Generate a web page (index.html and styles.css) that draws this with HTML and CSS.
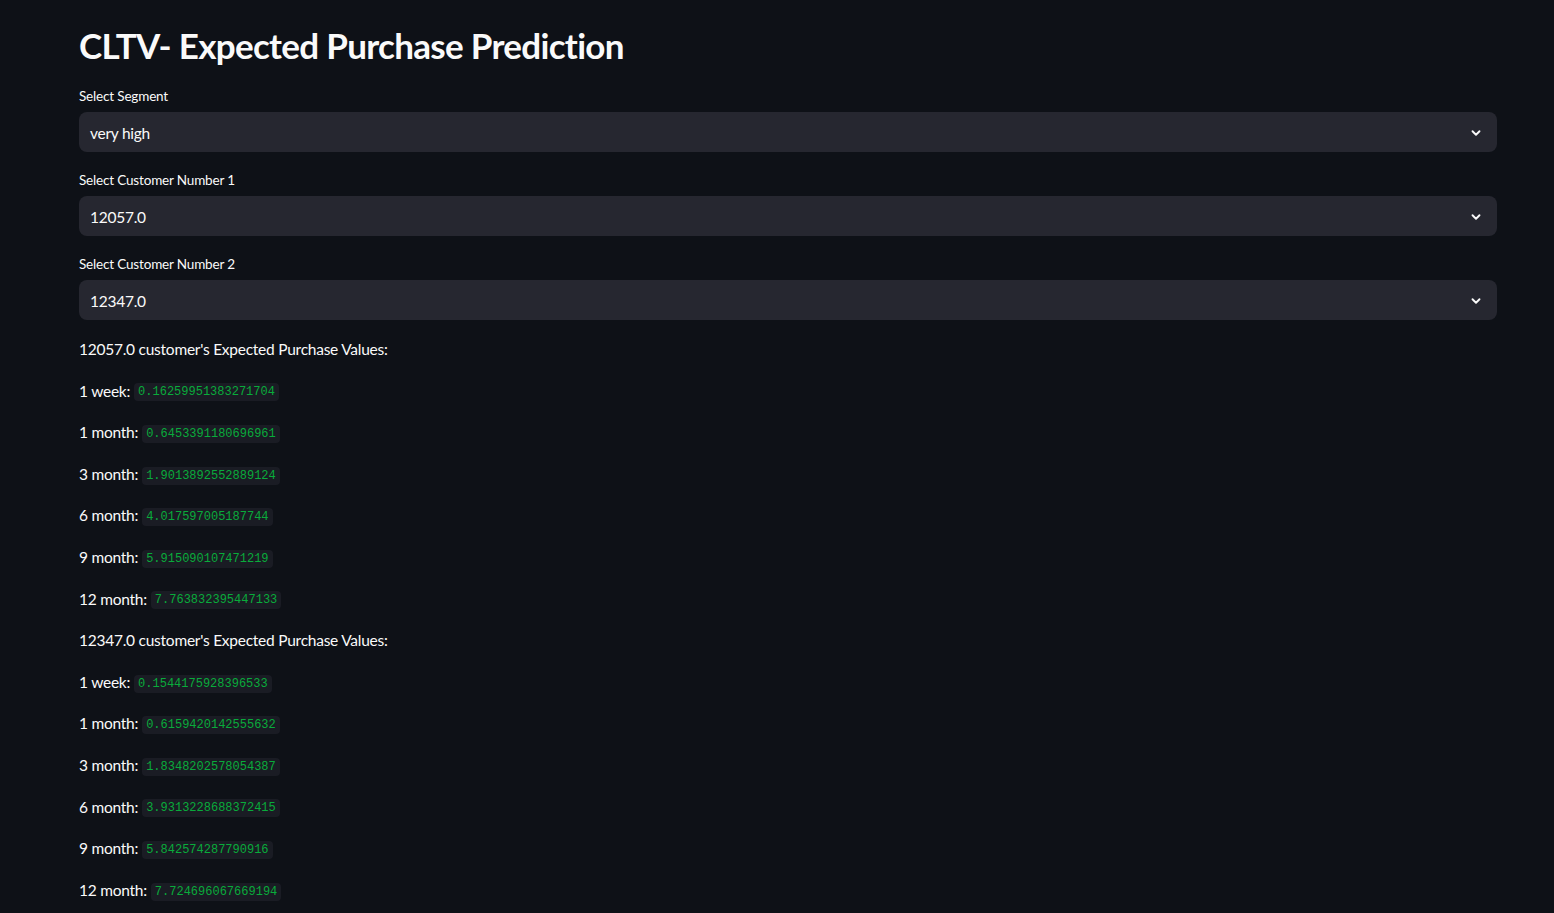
FILE: index.html
```html
<!DOCTYPE html>
<html lang="en">
<head>
<meta charset="utf-8">
<title>CLTV- Expected Purchase Prediction</title>
<link rel="stylesheet" href="styles.css">
</head>
<body>
<main class="main">
  <h1 class="title">CLTV- Expected Purchase Prediction</h1>

  <div class="widget">
    <label class="widget-label">Select Segment</label>
    <div class="select">
      <span class="select-value">very high</span>
      <svg class="chevron" width="14" height="14" viewBox="0 0 24 24"><path d="M6 9l6 6 6-6" fill="none" stroke="#fafafa" stroke-width="3.2" stroke-linecap="round" stroke-linejoin="round"/></svg>
    </div>
  </div>

  <div class="widget">
    <label class="widget-label">Select Customer Number 1</label>
    <div class="select">
      <span class="select-value">12057.0</span>
      <svg class="chevron" width="14" height="14" viewBox="0 0 24 24"><path d="M6 9l6 6 6-6" fill="none" stroke="#fafafa" stroke-width="3.2" stroke-linecap="round" stroke-linejoin="round"/></svg>
    </div>
  </div>

  <div class="widget">
    <label class="widget-label">Select Customer Number 2</label>
    <div class="select">
      <span class="select-value">12347.0</span>
      <svg class="chevron" width="14" height="14" viewBox="0 0 24 24"><path d="M6 9l6 6 6-6" fill="none" stroke="#fafafa" stroke-width="3.2" stroke-linecap="round" stroke-linejoin="round"/></svg>
    </div>
  </div>

  <div class="results">
    <p>12057.0 customer's Expected Purchase Values:</p>
    <p><span>1 week:</span><code>0.16259951383271704</code></p>
    <p><span>1 month:</span><code>0.6453391180696961</code></p>
    <p><span>3 month:</span><code>1.9013892552889124</code></p>
    <p><span>6 month:</span><code>4.017597005187744</code></p>
    <p><span>9 month:</span><code>5.915090107471219</code></p>
    <p><span>12 month:</span><code>7.763832395447133</code></p>
    <p>12347.0 customer's Expected Purchase Values:</p>
    <p><span>1 week:</span><code>0.1544175928396533</code></p>
    <p><span>1 month:</span><code>0.6159420142555632</code></p>
    <p><span>3 month:</span><code>1.8348202578054387</code></p>
    <p><span>6 month:</span><code>3.9313228688372415</code></p>
    <p><span>9 month:</span><code>5.842574287790916</code></p>
    <p><span>12 month:</span><code>7.724696067669194</code></p>
  </div>
</main>
</body>
</html>
```
FILE: styles.css
```css
html, body {
  margin: 0;
  padding: 0;
  background: #0e1117;
  color: #fafafa;
  font-family: "Lato", "Noto Sans", sans-serif;
}

.main {
  padding: 21px 57px 0 79px;
}

.title {
  margin: 0;
  font-size: 35px;
  font-weight: 700;
  line-height: 48px;
  letter-spacing: -0.7px;
}

.widget {
  display: flex;
  flex-direction: column;
  gap: 6px;
  margin-top: 18px;
}

.title + .widget {
  margin-top: 17px;
}

.widget-label {
  font-size: 13.5px;
  line-height: 20px;
  letter-spacing: -0.17px;
}

.select {
  box-sizing: border-box;
  height: 40px;
  background: #262730;
  border-radius: 8px;
  display: flex;
  align-items: center;
  justify-content: space-between;
  padding: 1px 14px 0 11px;
}

.select-value {
  font-size: 15.5px;
  letter-spacing: -0.25px;
}

.chevron {
  display: block;
}

.results {
  padding-top: 17px;
}

.results p {
  margin: 0 0 16px;
  height: 25.6px;
  display: flex;
  align-items: center;
  gap: 4px;
  font-size: 15.5px;
  line-height: 25.6px;
  letter-spacing: -0.25px;
}

code {
  font-family: "Liberation Mono", "DejaVu Sans Mono", monospace;
  font-size: 12px;
  line-height: 14px;
  letter-spacing: 0;
  color: #09ab3b;
  background: #1a1c24;
  padding: 2px 4px;
  border-radius: 4px;
  margin-top: 2px;
}
```
